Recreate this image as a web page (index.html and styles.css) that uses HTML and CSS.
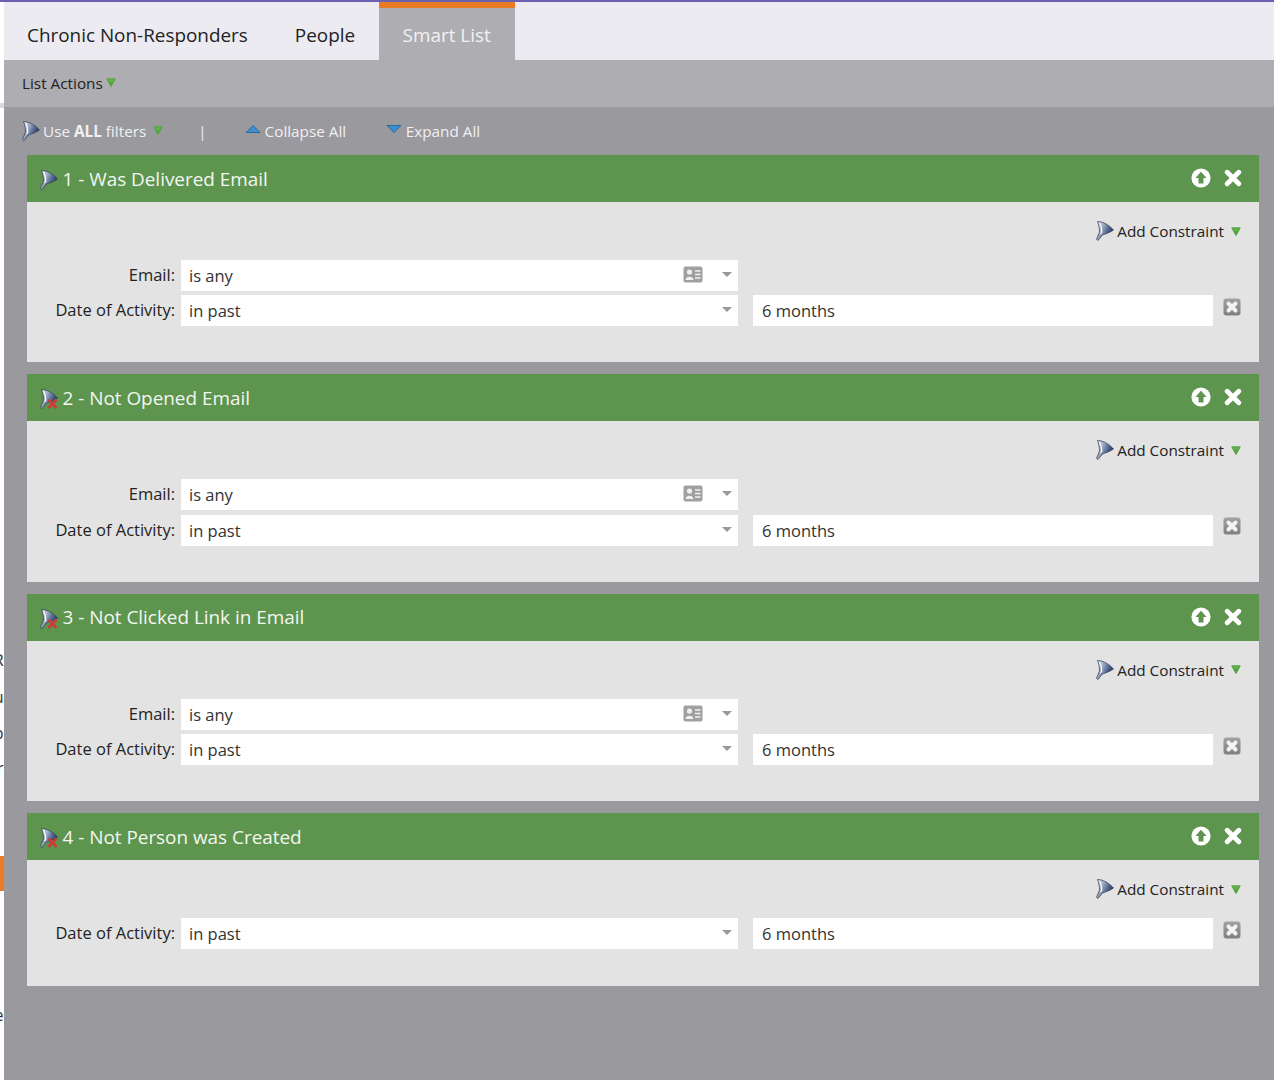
FILE: index.html
```html
<!DOCTYPE html>
<html lang="en">
<head>
<meta charset="utf-8">
<title>Smart List</title>
<link rel="stylesheet" href="styles.css">
</head>
<body>
<svg class="defs" width="0" height="0" aria-hidden="true">
  <defs>
    <linearGradient id="fg" x1="0" y1="0" x2="1" y2="0.5">
      <stop offset="0" stop-color="#dfe5ec"/>
      <stop offset="0.4" stop-color="#9fadc2"/>
      <stop offset="0.72" stop-color="#4f6590"/>
      <stop offset="1" stop-color="#26365f"/>
    </linearGradient>
    <linearGradient id="tg" x1="0" y1="0" x2="0" y2="1">
      <stop offset="0" stop-color="#6cc04f"/>
      <stop offset="1" stop-color="#3c8c30"/>
    </linearGradient>
    <linearGradient id="rg" x1="0" y1="0" x2="0" y2="1">
      <stop offset="0" stop-color="#a2a2a2"/>
      <stop offset="1" stop-color="#7f7f7f"/>
    </linearGradient>
    <symbol id="funnel" viewBox="1.500 0.500 18 20">
      <path d="M3 1C9 1 15 5 19 9.500C14.500 12.500 10.500 13.500 8 14.500L3.500 20L2 18.800L5 11.500C5 8 4.300 4 3 1Z" fill="url(#fg)" stroke="#2f3950" stroke-width=".7"/>
      <path d="M5 2.500C6.500 5 7.500 8 7.200 11.500L6 13.500" fill="none" stroke="#fff" stroke-width="1.200"/>
    </symbol>
    <symbol id="funnel-x" viewBox="1.500 0.500 18 20">
      <path d="M3 1C9 1 15 5 19 9.500C14.500 12.500 10.500 13.500 8 14.500L3.500 20L2 18.800L5 11.500C5 8 4.300 4 3 1Z" fill="url(#fg)" stroke="#2f3950" stroke-width=".7"/>
      <path d="M5 2.500C6.500 5 7.500 8 7.200 11.500L6 13.500" fill="none" stroke="#fff" stroke-width="1.200"/>
      <path d="M10 11L18 19.500M18 11L10 19.500" stroke="#cf3b36" stroke-width="2.600"/>
    </symbol>
    <symbol id="tri" viewBox="0 0 10 9">
      <path d="M1 1H9L5 8.300Z" fill="url(#tg)" stroke="#5aa548" stroke-width="1.300" stroke-linejoin="round"/>
    </symbol>
    <symbol id="up" viewBox="0 0 20 20">
      <circle cx="10" cy="10" r="9.600" fill="#fff"/>
      <path d="M10 3.800L15.600 9.900H12.500V15.500H7.500V9.900H4.400Z" fill="#5d944e"/>
    </symbol>
    <symbol id="close" viewBox="0 0 18 18">
      <path d="M3.200 3.200L14.800 14.800M14.800 3.200L3.200 14.800" stroke="#fff" stroke-width="4.800" stroke-linecap="round"/>
    </symbol>
    <symbol id="card-ico" viewBox="0 0 20 17">
      <rect x="0.500" y="0.500" width="19" height="16" rx="2" fill="#a0a0a0"/>
      <circle cx="6.500" cy="6" r="2.600" fill="#f0f0f0"/>
      <path d="M2.600 14C2.600 9.600 10.400 9.600 10.400 14Z" fill="#f0f0f0"/>
      <path d="M12 5H17.500M12 8.500H17.500M12 12H17.500" stroke="#f0f0f0" stroke-width="1.700"/>
    </symbol>
    <symbol id="remove" viewBox="0 0 18 18">
      <rect x="0.500" y="0.500" width="17" height="17" rx="3" fill="url(#rg)"/>
      <path d="M5.500 5.500L12.500 12.500M12.500 5.500L5.500 12.500" stroke="#f2f2f2" stroke-width="4" stroke-linecap="round"/>
    </symbol>
  </defs>
</svg>

<div class="page">
  <aside class="edge">
    <span class="frag f1">R</span>
    <span class="frag f2">u</span>
    <span class="frag f3">p</span>
    <span class="frag f4">r</span>
    <span class="frag f5">e</span>
    <span class="edge-mark"></span>
    <span class="edge-notch"></span>
  </aside>

  <main class="main">
    <nav class="tabs">
      <a class="tab">Chronic Non-Responders</a>
      <a class="tab">People</a>
      <a class="tab active">Smart List</a>
    </nav>

    <div class="actions">
      <span>List Actions</span>
      <svg class="tri tri-tight"><use href="#tri"/></svg>
    </div>

    <div class="content">
      <div class="toolbar">
        <span class="tool use-all">
          <svg class="funnel-sm"><use href="#funnel"/></svg>
          <span>Use <b>ALL</b> filters</span>
          <svg class="tri tri-gap"><use href="#tri"/></svg>
        </span>
        <span class="sep">|</span>
        <span class="tool collapse">
          <svg class="arrow" viewBox="0 0 16 10"><path d="M8 1.500L15 8.500H1Z" fill="#3f8fce" stroke="#2a6a9f"/></svg>
          Collapse All
        </span>
        <span class="tool expand">
          <svg class="arrow" viewBox="0 0 16 10"><path d="M1 1.500H15L8 8.500Z" fill="#3f8fce" stroke="#2a6a9f"/></svg>
          Expand All
        </span>
      </div>

      <section class="card">
        <header class="card-head">
          <svg class="funnel-head"><use href="#funnel"/></svg>
          <h2>1 - Was Delivered Email</h2>
          <svg class="ico-up"><use href="#up"/></svg>
          <svg class="ico-close"><use href="#close"/></svg>
        </header>
        <div class="card-body">
          <div class="constraint">
            <svg class="funnel-sm"><use href="#funnel"/></svg>
            <span>Add Constraint</span>
            <svg class="tri tri-end"><use href="#tri"/></svg>
          </div>
          <div class="row">
            <label class="lbl">Email:</label>
            <div class="field">is any
              <svg class="ico-card"><use href="#card-ico"/></svg>
              <i class="caret"></i>
            </div>
          </div>
          <div class="row">
            <label class="lbl">Date of Activity:</label>
            <div class="field">in past <i class="caret caret-solo"></i></div>
            <div class="field second">6 months</div>
            <svg class="ico-remove"><use href="#remove"/></svg>
          </div>
        </div>
      </section>

      <section class="card">
        <header class="card-head">
          <svg class="funnel-head"><use href="#funnel-x"/></svg>
          <h2>2 - Not Opened Email</h2>
          <svg class="ico-up"><use href="#up"/></svg>
          <svg class="ico-close"><use href="#close"/></svg>
        </header>
        <div class="card-body">
          <div class="constraint">
            <svg class="funnel-sm"><use href="#funnel"/></svg>
            <span>Add Constraint</span>
            <svg class="tri tri-end"><use href="#tri"/></svg>
          </div>
          <div class="row">
            <label class="lbl">Email:</label>
            <div class="field">is any
              <svg class="ico-card"><use href="#card-ico"/></svg>
              <i class="caret"></i>
            </div>
          </div>
          <div class="row">
            <label class="lbl">Date of Activity:</label>
            <div class="field">in past <i class="caret caret-solo"></i></div>
            <div class="field second">6 months</div>
            <svg class="ico-remove"><use href="#remove"/></svg>
          </div>
        </div>
      </section>

      <section class="card">
        <header class="card-head">
          <svg class="funnel-head"><use href="#funnel-x"/></svg>
          <h2>3 - Not Clicked Link in Email</h2>
          <svg class="ico-up"><use href="#up"/></svg>
          <svg class="ico-close"><use href="#close"/></svg>
        </header>
        <div class="card-body">
          <div class="constraint">
            <svg class="funnel-sm"><use href="#funnel"/></svg>
            <span>Add Constraint</span>
            <svg class="tri tri-end"><use href="#tri"/></svg>
          </div>
          <div class="row">
            <label class="lbl">Email:</label>
            <div class="field">is any
              <svg class="ico-card"><use href="#card-ico"/></svg>
              <i class="caret"></i>
            </div>
          </div>
          <div class="row">
            <label class="lbl">Date of Activity:</label>
            <div class="field">in past <i class="caret caret-solo"></i></div>
            <div class="field second">6 months</div>
            <svg class="ico-remove"><use href="#remove"/></svg>
          </div>
        </div>
      </section>

      <section class="card">
        <header class="card-head">
          <svg class="funnel-head"><use href="#funnel-x"/></svg>
          <h2>4 - Not Person was Created</h2>
          <svg class="ico-up"><use href="#up"/></svg>
          <svg class="ico-close"><use href="#close"/></svg>
        </header>
        <div class="card-body">
          <div class="constraint">
            <svg class="funnel-sm"><use href="#funnel"/></svg>
            <span>Add Constraint</span>
            <svg class="tri tri-end"><use href="#tri"/></svg>
          </div>
          <div class="row">
            <label class="lbl">Date of Activity:</label>
            <div class="field">in past <i class="caret caret-solo"></i></div>
            <div class="field second">6 months</div>
            <svg class="ico-remove"><use href="#remove"/></svg>
          </div>
        </div>
      </section>
    </div>
  </main>
</div>
</body>
</html>
```

FILE: styles.css
```css
* { box-sizing: border-box; }

html, body {
  margin: 0;
  height: 1080px;
  overflow: hidden;
  background: #fff;
  font-family: "Open Sans", "Liberation Sans", sans-serif;
  color: #222;
}

.defs { position: absolute; }

.page {
  display: flex;
  height: 1080px;
  border-top: 2px solid #6a5fb1;
}

/* clipped neighbour column peeking in at the left */
.edge {
  position: relative;
  flex: 0 0 3.5px;
  overflow: hidden;
  background: #fff;
}
.frag {
  position: absolute;
  right: 0;
  font-size: 16px;
  line-height: 20px;
  color: #333;
}
.f1 { top: 648px; }
.f2 { top: 685px; }
.f3 { top: 721px; }
.f4 { top: 756px; }
.f5 { top: 1003px; }
.edge-mark {
  position: absolute;
  left: 0;
  right: 0;
  top: 854px;
  height: 35px;
  background: #e87b24;
}
.edge-notch {
  position: absolute;
  left: 0;
  right: 0;
  top: 101px;
  height: 5px;
  background: #d9d9db;
}

.main {
  flex: 1;
  min-width: 0;
  display: flex;
  flex-direction: column;
}

/* tabs */
.tabs {
  display: flex;
  height: 58px;
  background: #ecebf2;
}
.tab {
  padding: 0 23.500px;
  font-size: 18.900px;
  line-height: 67px;
  color: #222;
}
.tab.active {
  background: #aeadb2;
  border-top: 6px solid #e87b24;
  line-height: 55px;
  padding: 0 24px;
  color: #f2f2f4;
}

/* list actions */
.actions {
  display: flex;
  align-items: center;
  height: 47px;
  padding: 0 0 1px 18.500px;
  background: #aeadb2;
  font-size: 15.300px;
  color: #222;
}

.tri { width: 10px; height: 9px; flex: none; }
.tri-tight { margin: -2px 0 0 3px; }
.tri-gap { margin: 0 0 0 7px; }
.tri-end { margin-left: 7px; margin-right: 18px; }

/* content */
.content {
  flex: 1;
  padding: 0 15px 0 23.500px;
  background: #9a999e;
}

.toolbar {
  display: flex;
  align-items: center;
  height: 48px;
  margin-left: -5px;
  padding-bottom: 1px;
  font-size: 15.300px;
  color: #f0f0f3;
}
.tool { display: flex; align-items: center; }
.sep { margin-left: 35px; font-size: 15px; }
.collapse { margin-left: 38px; }
.expand { margin-left: 39.500px; }
.arrow { width: 16px; height: 10px; margin-right: 4px; margin-top: -3px; }
.use-all b { font-weight: 700; }

.funnel-sm { width: 18px; height: 20px; margin-right: 3px; flex: none; }

.card { margin-bottom: 12px; }

.card-head {
  display: flex;
  align-items: center;
  height: 47px;
  padding: 0 17px 0 12.500px;
  background: #5d944e;
  color: #f4f6f2;
}
.funnel-head { width: 18px; height: 20px; margin: 3px 5px 0 0; flex: none; }
.card-head h2 {
  flex: 1;
  margin: 0;
  font-size: 18.900px;
  font-weight: 400;
}
.ico-up { width: 20px; height: 20px; margin-top: -1px; }
.ico-close { width: 18px; height: 18px; margin-left: 13px; margin-top: -1px; }

.card-body {
  padding: 18px 0 36.250px;
  background: #e3e3e3;
}

.constraint {
  display: flex;
  align-items: center;
  justify-content: flex-end;
  height: 22px;
  margin-bottom: 18px;
  font-size: 15.300px;
  color: #222;
}

.row {
  display: flex;
  align-items: center;
  height: 31px;
  margin-bottom: 4.200px;
  font-size: 16.500px;
}
.row:last-child { margin-bottom: 0; }

.lbl {
  width: 148px;
  margin-right: 6px;
  text-align: right;
  margin-top: -2px;
}

.field {
  position: relative;
  display: flex;
  align-items: center;
  flex: 0 0 557px;
  height: 31px;
  padding: 0 0 0 8px;
  background: #fff;
  color: #333;
}
.field.second {
  flex-basis: 460px;
  margin-left: 15px;
  padding-left: 9px;
}

.ico-card {
  position: absolute;
  right: 35px;
  top: 6px;
  width: 20px;
  height: 17px;
}
.caret {
  position: absolute;
  right: 6px;
  top: 12px;
  width: 0;
  height: 0;
  border-left: 5px solid transparent;
  border-right: 5px solid transparent;
  border-top: 5px solid #999;
}
.caret-solo { top: 12px; }

.ico-remove {
  width: 18px;
  height: 18px;
  margin: -8px 0 0 10px;
}
```
